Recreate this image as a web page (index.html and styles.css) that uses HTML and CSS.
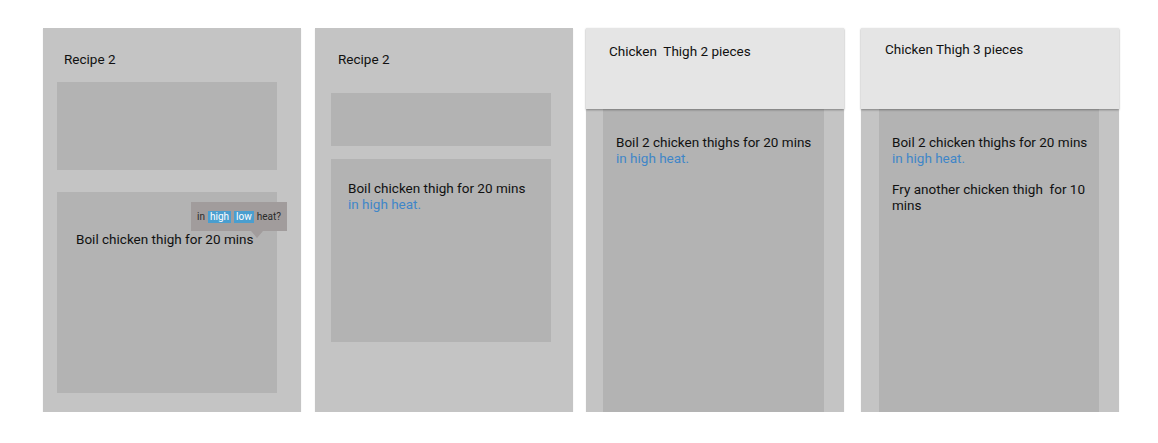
FILE: index.html
```html
<!DOCTYPE html>
<html>
<head>
<meta charset="utf-8">
<link rel="stylesheet" href="styles.css">
</head>
<body>
<div class="row">
  <section class="panel p1">
    <div class="title">Recipe 2</div>
    <div class="box b1"></div>
    <div class="box b2">
      <div class="tip">
        <span>in</span><span class="chip">high</span><span class="chip">low</span><span>heat?</span>
        <i class="arrow"></i>
      </div>
      <p class="txt">Boil chicken thigh for 20 mins</p>
    </div>
  </section>
  <section class="panel p2">
    <div class="title">Recipe 2</div>
    <div class="box b1"></div>
    <div class="box b2">
      <p class="txt">Boil chicken thigh for 20 mins<br><span class="blue">in high heat.</span></p>
    </div>
  </section>
  <section class="panel p3">
    <header class="head">Chicken&nbsp; Thigh 2 pieces</header>
    <div class="col">
      <p class="txt">Boil 2 chicken thighs for 20 mins<br><span class="blue">in high heat.</span></p>
    </div>
  </section>
  <section class="panel p4">
    <header class="head">Chicken Thigh 3 pieces</header>
    <div class="col">
      <p class="txt">Boil 2 chicken thighs for 20 mins<br><span class="blue">in high heat.</span></p>
      <p class="txt second">Fry another chicken thigh&nbsp; for 10 mins</p>
    </div>
  </section>
</div>
</body>
</html>
```
FILE: styles.css
```css
html, body {
  margin: 0;
  padding: 0;
  background: #ffffff;
}
body {
  font-family: Roboto, "Liberation Sans", sans-serif;
  font-size: 13.5px;
  line-height: 16px;
  color: #111111;
}
.row {
  display: flex;
  align-items: flex-start;
  padding: 28px 0 0 43px;
  gap: 13px;
}
.panel {
  width: 258px;
  height: 384px;
  background: #c4c4c4;
  display: flex;
  flex-direction: column;
  box-shadow: 0 1px 1px rgba(0,0,0,0.12);
  flex-shrink: 0;
}
.p2 { margin-left: 1px; }
.p4 { margin-left: 4px; }

.box { background: #b3b3b3; width: 220px; }
.txt { margin: 0; }
.blue { color: #3f86c8; }

/* panel 1 */
.p1 { padding-top: 23px; box-sizing: border-box; }
.p1 .title { padding-left: 21px; }
.p1 .b1 { margin: 15px 0 0 14px; height: 88px; }
.p1 .b2 {
  margin: 22px 0 0 14px;
  height: 201px;
  position: relative;
  box-sizing: border-box;
  padding: 39px 0 0 19px;
}

.tip {
  position: absolute;
  left: 134px;
  top: 10px;
  width: 96px;
  height: 29px;
  background: #a19c9c;
  display: flex;
  align-items: center;
  justify-content: center;
  gap: 3px;
  font-size: 10px;
  line-height: 12px;
  color: #2a2a2a;
}
.tip .chip {
  background: #4a9ecf;
  color: #ffffff;
  padding: 0 2px;
}
.tip .arrow {
  position: absolute;
  left: 60px;
  top: 29px;
  width: 0;
  height: 0;
  border-left: 6px solid transparent;
  border-right: 6px solid transparent;
  border-top: 7px solid #a19c9c;
}

/* panel 2 */
.p2 { padding-top: 23px; box-sizing: border-box; }
.p2 .title { padding-left: 23px; }
.p2 .b1 { margin: 26px 0 0 16px; height: 53px; }
.p2 .b2 {
  margin: 13px 0 0 16px;
  height: 183px;
  box-sizing: border-box;
  padding: 21px 0 0 17px;
}

/* panels 3, 4 */
.head {
  height: 81px;
  background: #e5e5e5;
  box-sizing: border-box;
  position: relative;
  z-index: 1;
  box-shadow: 0 1px 2px rgba(0,0,0,0.35);
  flex-shrink: 0;
}
.col {
  flex: 1;
  background: #b3b3b3;
  box-sizing: border-box;
  padding: 25px 8px 0 13px;
}
.p3 .head { padding: 15px 0 0 23px; }
.p3 .col { margin-left: 17px; width: 221px; }
.p4 .head { padding: 13px 0 0 24px; }
.p4 .col { margin-left: 18px; width: 220px; }
.second { margin-top: 15px; }
```
